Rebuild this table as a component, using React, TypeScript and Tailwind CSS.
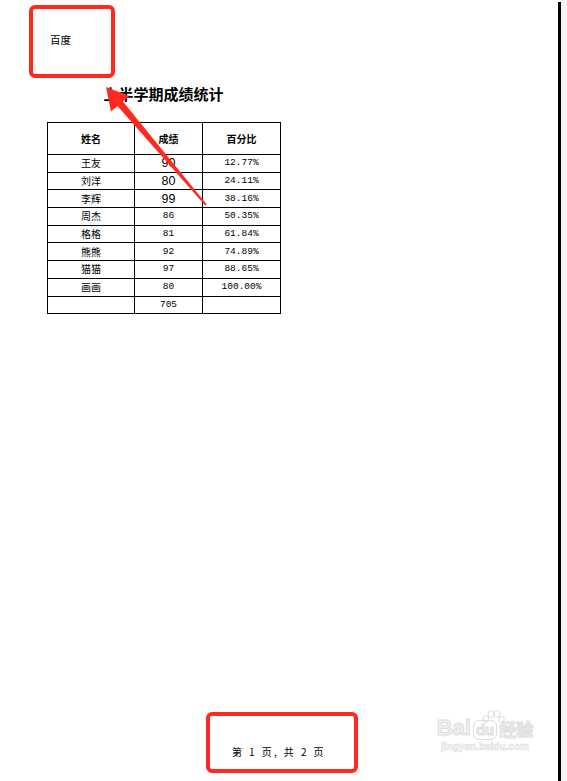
const rows = [
  { name: "王友", score: "90", pct: "12.77%", big: true },
  { name: "刘洋", score: "80", pct: "24.11%", big: true },
  { name: "李辉", score: "99", pct: "38.16%", big: true },
  { name: "周杰", score: "86", pct: "50.35%" },
  { name: "格格", score: "81", pct: "61.84%" },
  { name: "熊熊", score: "92", pct: "74.89%" },
  { name: "猫猫", score: "97", pct: "88.65%" },
  { name: "画画", score: "80", pct: "100.00%" },
  { name: "", score: "705", pct: "" },
];

const cjk = "font-['Noto_Sans_CJK_SC','Noto_Sans',sans-serif]";
const mono = "font-['Liberation_Mono','DejaVu_Sans_Mono',monospace]";

const Watermark = () => (
  <div className="pointer-events-none absolute left-[433px] top-[716px] flex w-[104px] flex-col items-center text-[#f0f0f0]">
    <div className="relative flex items-end font-['Liberation_Sans',sans-serif] text-[22px] font-bold leading-[24px] [-webkit-text-stroke:1px_#dedede]">
      <span>Bai</span>
      <span className="ml-[2px] rounded-[6px] border border-[#dedede] px-[2px] text-[15px] leading-[18px]">du</span>
      <span className={`ml-[2px] ${cjk} text-[17px] leading-[22px]`}>经验</span>
      <svg className="absolute left-[44px] top-[-6px]" width="24" height="16" viewBox="0 0 24 16">
        <g fill="none" stroke="#dedede" strokeWidth="1">
          <ellipse cx="5" cy="9" rx="3" ry="3.5" />
          <ellipse cx="10" cy="4" rx="3" ry="3.5" />
          <ellipse cx="16" cy="4" rx="3" ry="3.5" />
          <ellipse cx="20.5" cy="9.5" rx="2.8" ry="3.3" />
        </g>
      </svg>
    </div>
    <div className="mt-[1px] font-['Liberation_Sans',sans-serif] text-[10px] font-bold leading-[12px] [-webkit-text-stroke:0.5px_#e0e0e0]">
      jingyan.baidu.com
    </div>
  </div>
);

const App = () => {
  return (
    <div className={`flex h-[781px] w-[567px] overflow-hidden bg-white text-black ${cjk}`}>
      <div className="relative flex flex-1 flex-col">
        <div className="pl-[50px] pt-[33px] text-[10.5px] leading-[14px]">百度</div>

        <div className="ml-[47px] w-[233px]">
          <h1 className="mt-[38px] text-center text-[15px] font-bold leading-[18px]">上半学期成绩统计</h1>
          <table className="mt-[19px] w-[233px] table-fixed border-collapse text-center text-[10px]">
            <colgroup>
              <col className="w-[87px]" />
              <col className="w-[68px]" />
              <col className="w-[78px]" />
            </colgroup>
            <thead>
              <tr className="h-[32px]">
                <th className="border border-black font-bold">姓名</th>
                <th className="border border-black font-bold">成绩</th>
                <th className="border border-black font-bold">百分比</th>
              </tr>
            </thead>
            <tbody>
              {rows.map((r, i) => (
                <tr key={i} className="h-[17.7px]">
                  <td className="border border-black p-0 leading-[12px]">{r.name}</td>
                  <td
                    className={`border border-black p-0 leading-[12px] ${
                      r.big ? "font-['Liberation_Sans',sans-serif] text-[12.5px]" : `${mono} text-[9.5px]`
                    }`}
                  >
                    {r.score}
                  </td>
                  <td className={`border border-black p-0 leading-[12px] ${mono} text-[9.5px]`}>{r.pct}</td>
                </tr>
              ))}
            </tbody>
          </table>
        </div>

        <div className="mt-auto mb-[23px] pl-[232px] text-[10px] leading-[12px] tracking-[2.4px]">
          第 1 页, 共 2 页
        </div>

        {/* annotations */}
        <div className="absolute left-[29px] top-[5px] h-[73px] w-[86px] rounded-[6px] border-[4px] border-[#ff2a1f]" />
        <div className="absolute left-[206px] top-[712px] h-[61px] w-[152px] rounded-[6px] border-[4px] border-[#ff2a1f]" />
        <svg className="pointer-events-none absolute left-0 top-0" width="260" height="230" viewBox="0 0 260 230">
          <polygon
            fill="#ff2a1f"
            points="106,87 129.4,96.1 122.9,101.5 206.8,204.4 205.2,205.6 117.5,106.1 111,111.6"
          />
        </svg>
        <Watermark />
      </div>
      <div className="mt-[2px] w-[3px] bg-black" />
      <div className="w-[6px] bg-[#f4f5f7]" />
    </div>
  );
};

export default App;
